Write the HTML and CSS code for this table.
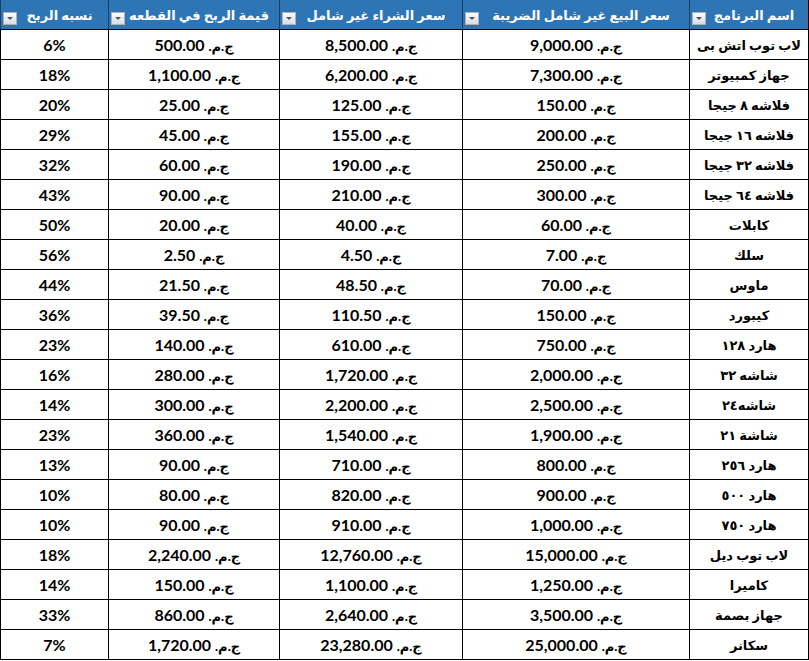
FILE: index.html
```html
<!DOCTYPE html>
<html lang="ar" dir="rtl">
<head>
<meta charset="utf-8">
<link rel="stylesheet" href="styles.css">
</head>
<body>
<table class="sheet">
  <colgroup>
    <col class="c-name"><col class="c-sell"><col class="c-buy"><col class="c-profit"><col class="c-pct">
  </colgroup>
  <thead>
    <tr>
      <th><span class="h">اسم البرنامج</span><span class="dd"></span></th>
      <th><span class="h">سعر البيع غير شامل الضريبة</span><span class="dd"></span></th>
      <th><span class="h">سعر الشراء غير شامل</span><span class="dd"></span></th>
      <th><span class="h">قيمة الربح في القطعه</span><span class="dd"></span></th>
      <th><span class="h">نسبه الربح</span><span class="dd"></span></th>
    </tr>
  </thead>
  <tbody>
    <tr><td>لاب توب اتش بى</td><td><span class="cur">ج.م.</span> 9,000.00</td><td><span class="cur">ج.م.</span> 8,500.00</td><td><span class="cur">ج.م.</span> 500.00</td><td>6%</td></tr>
    <tr><td>جهاز كمبيوتر</td><td><span class="cur">ج.م.</span> 7,300.00</td><td><span class="cur">ج.م.</span> 6,200.00</td><td><span class="cur">ج.م.</span> 1,100.00</td><td>18%</td></tr>
    <tr><td>فلاشه ٨ جيجا</td><td><span class="cur">ج.م.</span> 150.00</td><td><span class="cur">ج.م.</span> 125.00</td><td><span class="cur">ج.م.</span> 25.00</td><td>20%</td></tr>
    <tr><td>فلاشه ١٦ جيجا</td><td><span class="cur">ج.م.</span> 200.00</td><td><span class="cur">ج.م.</span> 155.00</td><td><span class="cur">ج.م.</span> 45.00</td><td>29%</td></tr>
    <tr><td>فلاشه ٣٢ جيجا</td><td><span class="cur">ج.م.</span> 250.00</td><td><span class="cur">ج.م.</span> 190.00</td><td><span class="cur">ج.م.</span> 60.00</td><td>32%</td></tr>
    <tr><td>فلاشه ٦٤ جيجا</td><td><span class="cur">ج.م.</span> 300.00</td><td><span class="cur">ج.م.</span> 210.00</td><td><span class="cur">ج.م.</span> 90.00</td><td>43%</td></tr>
    <tr><td>كابلات</td><td><span class="cur">ج.م.</span> 60.00</td><td><span class="cur">ج.م.</span> 40.00</td><td><span class="cur">ج.م.</span> 20.00</td><td>50%</td></tr>
    <tr><td>سلك</td><td><span class="cur">ج.م.</span> 7.00</td><td><span class="cur">ج.م.</span> 4.50</td><td><span class="cur">ج.م.</span> 2.50</td><td>56%</td></tr>
    <tr><td>ماوس</td><td><span class="cur">ج.م.</span> 70.00</td><td><span class="cur">ج.م.</span> 48.50</td><td><span class="cur">ج.م.</span> 21.50</td><td>44%</td></tr>
    <tr><td>كيبورد</td><td><span class="cur">ج.م.</span> 150.00</td><td><span class="cur">ج.م.</span> 110.50</td><td><span class="cur">ج.م.</span> 39.50</td><td>36%</td></tr>
    <tr><td>هارد ١٢٨</td><td><span class="cur">ج.م.</span> 750.00</td><td><span class="cur">ج.م.</span> 610.00</td><td><span class="cur">ج.م.</span> 140.00</td><td>23%</td></tr>
    <tr><td>شاشه ٣٢</td><td><span class="cur">ج.م.</span> 2,000.00</td><td><span class="cur">ج.م.</span> 1,720.00</td><td><span class="cur">ج.م.</span> 280.00</td><td>16%</td></tr>
    <tr><td>شاشه٢٤</td><td><span class="cur">ج.م.</span> 2,500.00</td><td><span class="cur">ج.م.</span> 2,200.00</td><td><span class="cur">ج.م.</span> 300.00</td><td>14%</td></tr>
    <tr><td>شاشة ٢١</td><td><span class="cur">ج.م.</span> 1,900.00</td><td><span class="cur">ج.م.</span> 1,540.00</td><td><span class="cur">ج.م.</span> 360.00</td><td>23%</td></tr>
    <tr><td>هارد ٢٥٦</td><td><span class="cur">ج.م.</span> 800.00</td><td><span class="cur">ج.م.</span> 710.00</td><td><span class="cur">ج.م.</span> 90.00</td><td>13%</td></tr>
    <tr><td>هارد ٥٠٠</td><td><span class="cur">ج.م.</span> 900.00</td><td><span class="cur">ج.م.</span> 820.00</td><td><span class="cur">ج.م.</span> 80.00</td><td>10%</td></tr>
    <tr><td>هارد ٧٥٠</td><td><span class="cur">ج.م.</span> 1,000.00</td><td><span class="cur">ج.م.</span> 910.00</td><td><span class="cur">ج.م.</span> 90.00</td><td>10%</td></tr>
    <tr><td>لاب توب ديل</td><td><span class="cur">ج.م.</span> 15,000.00</td><td><span class="cur">ج.م.</span> 12,760.00</td><td><span class="cur">ج.م.</span> 2,240.00</td><td>18%</td></tr>
    <tr><td>كاميرا</td><td><span class="cur">ج.م.</span> 1,250.00</td><td><span class="cur">ج.م.</span> 1,100.00</td><td><span class="cur">ج.م.</span> 150.00</td><td>14%</td></tr>
    <tr><td>جهاز بصمة</td><td><span class="cur">ج.م.</span> 3,500.00</td><td><span class="cur">ج.م.</span> 2,640.00</td><td><span class="cur">ج.م.</span> 860.00</td><td>33%</td></tr>
    <tr><td>سكانر</td><td><span class="cur">ج.م.</span> 25,000.00</td><td><span class="cur">ج.م.</span> 23,280.00</td><td><span class="cur">ج.م.</span> 1,720.00</td><td>7%</td></tr>
  </tbody>
</table>
</body>
</html>
```
FILE: styles.css
```css
html, body {
  margin: 0;
  padding: 0;
  background: #ffffff;
}
body {
  font-family: Lato, "DejaVu Sans", sans-serif;
  font-weight: 700;
  color: #000;
}
.sheet {
  border-collapse: collapse;
  table-layout: fixed;
  width: 808px;
  margin-left: 1px;
}
.c-name { width: 119px; }
.c-sell { width: 227px; }
.c-buy { width: 183px; }
.c-profit { width: 171px; }
.c-pct { width: 108px; }

.sheet th {
  position: relative;
  height: 29px;
  padding: 0;
  background: #2e75b6;
  color: #ffffff;
  font-size: 13px;
  font-weight: 700;
  text-align: center;
  vertical-align: middle;
  border: 1px solid #000;
  border-top: 0;
  border-left-color: #1d3f66;
  white-space: nowrap;
}
.h {
  display: inline-block;
  padding-left: 10px;
}
.dd {
  position: absolute;
  left: 2px;
  top: 12px;
  width: 12px;
  height: 11px;
  border: 1px solid #a9b4c2;
  background: linear-gradient(#fbfbfb, #d9dde3);
}
.dd::after {
  content: "";
  position: absolute;
  left: 3px;
  top: 4px;
  border-left: 3px solid transparent;
  border-right: 3px solid transparent;
  border-top: 3px solid #555;
}
.sheet td {
  height: 29px;
  padding: 0 4px;
  font-size: 16px;
  text-align: center;
  vertical-align: middle;
  border: 1px solid #000;
  white-space: nowrap;
}
.sheet td:first-child {
  font-size: 13px;
}
.cur {
  font-size: 13px;
}
```
